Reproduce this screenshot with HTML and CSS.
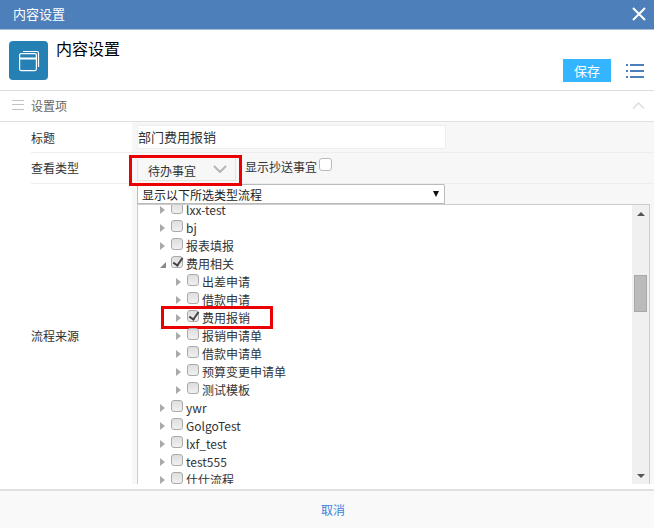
FILE: index.html
```html
<!DOCTYPE html>
<html lang="zh">
<head>
  <meta charset="UTF-8" />
  <title>内容设置</title>
  <link rel="stylesheet" href="styles.css">
</head>
<body>
  <div class="titlebar">
    <span>内容设置</span>
    <svg class="close" width="14" height="14" viewBox="0 0 14 14"><path d="M1 1l12 12M13 1L1 13" stroke="#fff" stroke-width="2"/></svg>
  </div>

  <div class="head">
    <div class="app-icon">
      <svg width="24" height="24" viewBox="0 0 24 24" fill="none" stroke="#fff" stroke-width="1.2">
        <path d="M6 2.5h14a1.5 1.5 0 0 1 1.500 1.500v14"/>
        <rect x="2.600" y="4.600" width="16.800" height="17" rx="1.500"/>
        <path d="M2.600 9.500h16.800" stroke-width="2"/>
      </svg>
    </div>
    <h1>内容设置</h1>
    <div class="head-actions">
      <button class="save">保存</button>
      <svg width="18" height="14" viewBox="0 0 18 14" fill="#4d7fba">
        <path d="M0 0h2v2H0zM4 0h14v2H4zM0 6h2v2H0zM4 6h14v2H4zM0 12h2v2H0zM4 12h14v2H4z"/>
      </svg>
    </div>
  </div>

  <div class="section">
    <svg width="12" height="10" viewBox="0 0 12 10" fill="#c4c4c4"><path d="M0 0h12v1H0zM0 4h12v1H0zM0 9h12v1H0z"/></svg>
    <span>设置项</span>
    <svg class="fold" width="13" height="7" viewBox="0 0 13 7" fill="none"><path d="M1 6.500l5.500-5.500 5.500 5.500" stroke="#ddd" stroke-width="1.500"/></svg>
  </div>

  <div class="row row-title">
    <div class="label">标题</div>
    <div class="value"><div class="title-input">部门费用报销</div></div>
  </div>

  <div class="row row-type">
    <div class="label">查看类型</div>
    <div class="value">
      <div class="type-select">
        <span>待办事宜</span>
        <svg width="14" height="8" viewBox="0 0 14 8" fill="none"><path d="M1 1l6 6 6-6" stroke="#b4b4b4" stroke-width="2"/></svg>
        <i class="mark mark-select"></i>
      </div>
      <span class="cc-label">显示抄送事宜</span>
      <span class="cc-box"></span>
    </div>
  </div>

  <div class="row row-flow">
    <div class="label">流程来源</div>
    <div class="value">
      <div class="flow-select">
        <span>显示以下所选类型流程</span>
        <i class="down"></i>
      </div>
      <div class="tree">
        <ul class="tree-list">
          <li><i class="arrow"></i><i class="cb"></i>lxx-test</li>
          <li><i class="arrow"></i><i class="cb"></i>bj</li>
          <li><i class="arrow"></i><i class="cb"></i>报表填报</li>
          <li><i class="arrow open"></i><i class="cb on"></i>费用相关</li>
          <li class="sub"><i class="arrow"></i><i class="cb"></i>出差申请</li>
          <li class="sub"><i class="arrow"></i><i class="cb"></i>借款申请</li>
          <li class="sub"><i class="arrow"></i><i class="cb on"></i>费用报销<i class="mark mark-row"></i></li>
          <li class="sub"><i class="arrow"></i><i class="cb"></i>报销申请单</li>
          <li class="sub"><i class="arrow"></i><i class="cb"></i>借款申请单</li>
          <li class="sub"><i class="arrow"></i><i class="cb"></i>预算变更申请单</li>
          <li class="sub"><i class="arrow"></i><i class="cb"></i>测试模板</li>
          <li><i class="arrow"></i><i class="cb"></i>ywr</li>
          <li><i class="arrow"></i><i class="cb"></i>GolgoTest</li>
          <li><i class="arrow"></i><i class="cb"></i>lxf_test</li>
          <li><i class="arrow"></i><i class="cb"></i>test555</li>
          <li><i class="arrow"></i><i class="cb"></i>什仕流程</li>
        </ul>
        <div class="scrollbar">
          <i class="sb-up"></i>
          <i class="sb-thumb"></i>
          <i class="sb-down"></i>
        </div>
      </div>
    </div>
  </div>

  <div class="footer"><a>取消</a></div>
</body>
</html>
```

FILE: styles.css
```css
:root {
  --blue: #4d7fba;
  --line: #e0e0e0;
  --panel: #f7f7f7;
  --text: #333;
}

* {
  margin: 0;
  padding: 0;
  box-sizing: border-box;
}

html, body {
  height: 528px;
  overflow: hidden;
}

body {
  display: flex;
  flex-direction: column;
  font-family: "Noto Sans CJK SC", "Noto Sans", sans-serif;
  font-size: 12px;
  color: var(--text);
  background: #fff;
}

i {
  display: block;
  font-style: normal;
}

.titlebar {
  height: 30px;
  flex: none;
  display: flex;
  justify-content: space-between;
  align-items: center;
  padding: 0 8px 2px 13px;
  background: var(--blue);
  border-bottom: 1px solid #a9bdd6;
  color: #fff;
  font-size: 13px;
}

.head {
  height: 61px;
  flex: none;
  display: flex;
  padding: 11px 10px 0 9px;
  border-bottom: 1px solid #ddd;
}

.app-icon {
  width: 39px;
  height: 39px;
  display: flex;
  align-items: center;
  justify-content: center;
  background: #2581b4;
  border-radius: 4px;
}

.head h1 {
  margin-left: 8px;
  font-size: 16px;
  font-weight: normal;
  line-height: 15px;
  color: #000;
}

.head-actions {
  margin-left: auto;
  margin-top: 18px;
  height: 23px;
  display: flex;
  align-items: center;
  gap: 15px;
}

.save {
  width: 48px;
  height: 23px;
  border: none;
  background: #33b5ff;
  color: #fff;
  font: inherit;
  font-size: 13px;
}

.section {
  height: 31px;
  flex: none;
  display: flex;
  align-items: center;
  padding: 0 9px 2px 12px;
  border-bottom: 1px solid var(--line);
  color: #666;
}

.section span {
  margin-left: 7px;
}

.fold {
  margin-left: auto;
}

.row {
  display: flex;
  flex: none;
  padding-left: 31px;
}

.label {
  width: 101px;
  flex: none;
  display: flex;
  align-items: center;
  border-bottom: 1px solid #eee;
}

.value {
  flex: 1;
  padding-left: 5px;
  background: var(--panel);
  border-bottom: 1px solid #eee;
}

.row-title {
  height: 31px;
}

.title-input {
  width: 309px;
  height: 24px;
  margin-top: 3px;
  background: #fff;
  border: 1px solid #eee;
  font-size: 13px;
  line-height: 22px;
}

.row-type {
  height: 31px;
}

.row-type .label {
  padding-bottom: 2px;
}

.row-type .value {
  display: flex;
  align-items: flex-start;
}

.type-select {
  position: relative;
  width: 99px;
  height: 24px;
  margin-top: 4px;
  padding: 2px 8px 0 10px;
  display: flex;
  align-items: center;
  justify-content: space-between;
  border: 1px solid #e6e6e0;
}

.type-select svg {
  margin-bottom: 3px;
}

.cc-label {
  margin: 5px 0 0 9px;
  line-height: 18px;
}

.cc-box {
  width: 13px;
  height: 13px;
  margin: 5px 0 0 2px;
  background: #fff;
  border: 1px solid #bbb;
  border-radius: 3px;
}

.mark {
  position: absolute;
  border: 3px solid #ea0000;
}

.mark-select {
  left: -9px;
  top: -3px;
  width: 113px;
  height: 31px;
}

.mark-row {
  left: 23px;
  top: -3px;
  width: 112px;
  height: 23px;
}

.row-flow {
  height: 300px;
}

.row-flow .value {
  border-bottom: none;
}

.row-flow .label {
  padding-top: 3px;
  border-bottom: none;
}

.flow-select {
  width: 308px;
  height: 21px;
  padding: 0 5px 0 4px;
  display: flex;
  align-items: center;
  justify-content: space-between;
  background: #fff;
  border: 1px solid #bbb;
  border-bottom-width: 2px;
  border-radius: 2px 2px 0 0;
  color: #222;
}

.down {
  width: 0;
  height: 0;
  border-left: 3px solid transparent;
  border-right: 3px solid transparent;
  border-top: 6px solid #111;
}

.tree {
  width: 513px;
  height: 280px;
  display: flex;
  justify-content: space-between;
  overflow: hidden;
  background: #fff;
  border-left: 1px solid #ccc;
  border-right: 1px solid #ccc;
  border-top: 1px solid #ccc;
  margin-top: -1px;
}

.tree-list {
  list-style: none;
  margin-top: -4px;
  color: #333;
}

.tree-list li {
  position: relative;
  height: 18px;
  display: flex;
  align-items: center;
  padding-left: 22px;
  line-height: 18px;
  white-space: nowrap;
}

.tree-list li.sub {
  padding-left: 38px;
}

.arrow {
  width: 0;
  height: 0;
  margin-right: 6px;
  border-left: 5px solid #aaa;
  border-top: 4px solid transparent;
  border-bottom: 4px solid transparent;
}

.arrow.open {
  margin-top: 2px;
  border-left: 6px solid transparent;
  border-top: none;
  border-bottom: 6px solid #888;
  margin-right: 5px;
}

.cb {
  position: relative;
  top: -2px;
  width: 12px;
  height: 12px;
  margin-right: 3px;
  background: linear-gradient(#dedede, #f0f0f0);
  border: 1px solid #aaa;
  border-radius: 3px;
}

.cb.on::after {
  content: "";
  position: absolute;
  left: 3px;
  top: -1px;
  width: 4px;
  height: 8px;
  border-right: 2px solid #444;
  border-bottom: 2px solid #444;
  transform: rotate(35deg);
}

.scrollbar {
  width: 17px;
  flex: none;
  display: flex;
  flex-direction: column;
  align-items: center;
  background: #f0f0f0;
}

.sb-up {
  margin-top: 7px;
  border-left: 4px solid transparent;
  border-right: 4px solid transparent;
  border-bottom: 4px solid #555;
}

.sb-thumb {
  width: 13px;
  height: 37px;
  margin-top: 59px;
  background: #bbb;
  border: 1px solid #a8a8a8;
}

.sb-down {
  margin-top: 162px;
  border-left: 4px solid transparent;
  border-right: 4px solid transparent;
  border-top: 4px solid #555;
}

.footer {
  flex: 1;
  margin-top: 5px;
  display: flex;
  align-items: center;
  justify-content: center;
  padding-left: 12px;
  background: #f9f9f9;
  border-top: 2px solid var(--line);
  color: #3b7fdd;
}
```
